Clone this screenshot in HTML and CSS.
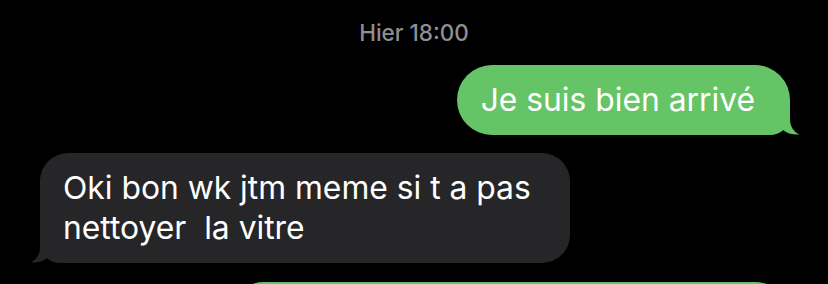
FILE: index.html
```html
<!DOCTYPE html>
<html lang="fr">
<head>
<meta charset="utf-8">
<title>Messages</title>
<link rel="stylesheet" href="styles.css">
</head>
<body>
<div class="thread">
  <div class="stamp">Hier 18:00</div>
  <div class="row out">
    <div class="bubble sent">Je suis bien arrivé<svg class="tail tail-right" width="30" height="36" viewBox="0 0 30 36"><path d="M0 0 L20 0 L20 20 C20 28 24 33 29.5 35.5 C23 36 17 34.5 13 31 C9 34 5 35 0 35 Z"/></svg></div>
  </div>
  <div class="row in">
    <div class="bubble received">Oki bon wk jtm meme si t a pas nettoyer&nbsp; la vitre<svg class="tail tail-left" width="30" height="36" viewBox="0 0 30 36"><path d="M0 0 L20 0 L20 20 C20 28 24 33 29.5 35.5 C23 36 17 34.5 13 31 C9 34 5 35 0 35 Z"/></svg></div>
  </div>
  <div class="row out">
    <div class="bubble sent next">&nbsp;</div>
  </div>
</div>
</body>
</html>
```
FILE: styles.css
```css
html, body {
  margin: 0;
  padding: 0;
  background: #000;
  overflow: hidden;
}

.thread {
  display: flex;
  flex-direction: column;
  padding: 20px 38px 0 40px;
  font-family: "Inter", "Noto Sans", sans-serif;
}

.stamp {
  text-align: center;
  color: #8e8e93;
  font-size: 22.5px;
  line-height: 26px;
  font-weight: 500;
  margin-bottom: 19px;
  margin-left: -2px;
}

.row {
  display: flex;
}

.row + .row {
  margin-top: 18px;
}

.row.out {
  justify-content: flex-end;
}

.row.in {
  justify-content: flex-start;
}

.bubble {
  position: relative;
  font-size: 31.8px;
  line-height: 40px;
  color: #fff;
  padding: 15px 35px 15px 24px;
  border-radius: 35px;
}

.sent {
  background: #65c466;
  border-bottom-right-radius: 20px;
}

.received {
  background: #262628;
  max-width: 475px;
  padding-left: 23px;
  padding-right: 32px;
  border-radius: 28px;
  border-bottom-left-radius: 20px;
}

.next {
  width: 502px;
  margin-top: 1px;
}

.tail {
  position: absolute;
  bottom: 0;
}

.tail-right {
  right: -10px;
  fill: #65c466;
}

.tail-left {
  left: -10px;
  fill: #262628;
  transform: scaleX(-1);
}
```
